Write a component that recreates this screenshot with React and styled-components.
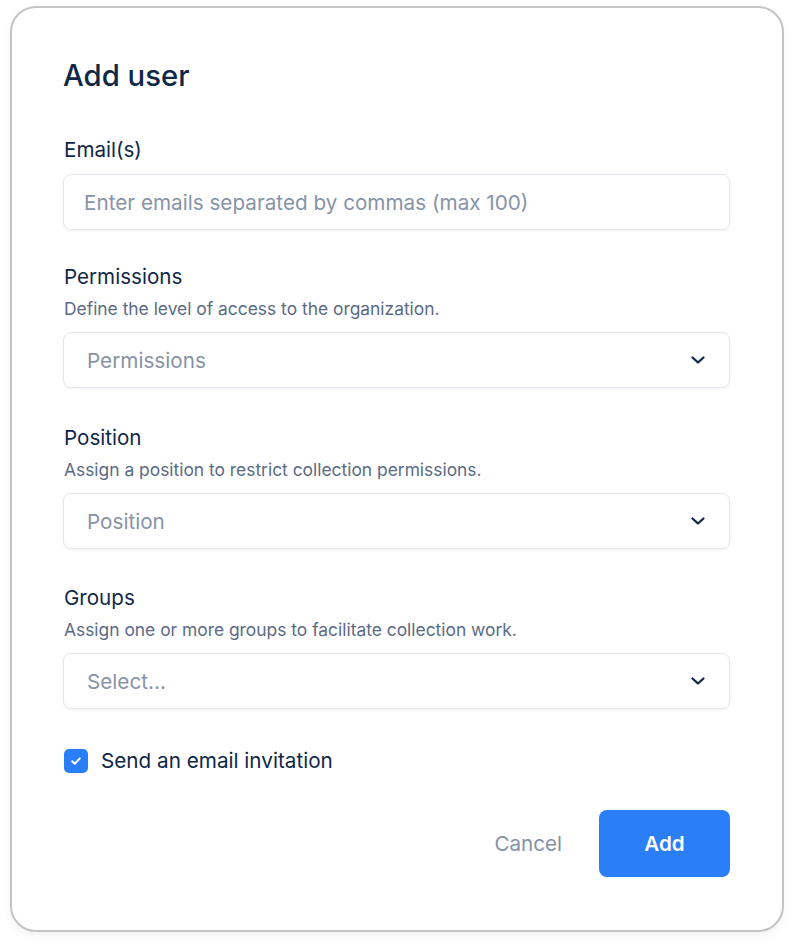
import React from "react";
import styled, { createGlobalStyle } from "styled-components";

const GlobalStyle = createGlobalStyle`
  body {
    margin: 0;
    background: #ffffff;
    font-family: Inter, "Noto Sans", sans-serif;
  }
`;

const Page = styled.div`
  width: 794px;
  height: 946px;
  padding: 6px 0 0 10px;
  box-sizing: border-box;
`;

const Card = styled.div`
  width: 774px;
  height: 926px;
  box-sizing: border-box;
  border: 2px solid #c4c4c4;
  border-radius: 26px;
  background: #ffffff;
  box-shadow: 0 4px 10px rgba(0, 0, 0, 0.05);
  padding: 43px 52px 0 51px;
  display: flex;
  flex-direction: column;
`;

const Title = styled.h1`
  margin: 0;
  font-size: 29.3px;
  font-weight: 500;
  line-height: 50px;
  color: #0f2748;
`;

const Field = styled.div`
  display: flex;
  flex-direction: column;
  margin-top: ${(p) => p.$top}px;
`;

const Label = styled.div`
  font-size: 20.6px;
  line-height: 24px;
  color: #0f2748;
  padding-left: 1px;
`;

const Hint = styled.div`
  font-size: 17.4px;
  line-height: 20px;
  color: #5b6b85;
  margin-top: 10px;
  padding-left: 1px;
`;

const Box = styled.div`
  margin-top: ${(p) => p.$top}px;
  height: 56px;
  box-sizing: border-box;
  border: 1px solid #e3e7ee;
  border-radius: 8px;
  box-shadow: 0 1px 3px rgba(15, 39, 72, 0.06);
  display: flex;
  align-items: center;
  justify-content: space-between;
  padding: 0 23px 0 ${(p) => p.$pad}px;
  font-size: 20.7px;
  color: #8893a7;
`;

const Chevron = () => (
  <svg width="16" height="16" viewBox="0 0 16 16" fill="none">
    <path
      d="M2.5 5.5 8 10.5l5.5-5"
      stroke="#0f2748"
      strokeWidth="2.3"
      strokeLinecap="round"
      strokeLinejoin="round"
    />
  </svg>
);

const CheckRow = styled.label`
  display: flex;
  align-items: center;
  gap: 13px;
  margin-top: 39px;
  padding-left: 1px;
  font-size: 20.7px;
  color: #0f2748;
`;

const CheckBox = styled.span`
  width: 24px;
  height: 24px;
  border-radius: 5px;
  background: #2a7ef7;
  display: flex;
  align-items: center;
  justify-content: center;
`;

const Actions = styled.div`
  display: flex;
  justify-content: flex-end;
  align-items: center;
  gap: 37px;
  margin-top: 37px;
`;

const CancelButton = styled.button`
  border: none;
  background: none;
  padding: 0;
  font-family: inherit;
  font-size: 20.6px;
  color: #8591a5;
  cursor: pointer;
`;

const AddButton = styled.button`
  width: 131px;
  height: 67px;
  border: none;
  border-radius: 8px;
  background: #2a7ef7;
  color: #ffffff;
  font-family: inherit;
  font-size: 20.6px;
  font-weight: 600;
  cursor: pointer;
`;

const App = () => (
  <Page>
    <GlobalStyle />
    <Card>
      <Title>Add user</Title>

      <Field $top={37}>
        <Label>Email(s)</Label>
        <Box $top={12} $pad={20}>Enter emails separated by commas (max 100)</Box>
      </Field>

      <Field $top={35}>
        <Label>Permissions</Label>
        <Hint>Define the level of access to the organization.</Hint>
        <Box $top={13} $pad={23}>
          Permissions
          <Chevron />
        </Box>
      </Field>

      <Field $top={38}>
        <Label>Position</Label>
        <Hint>Assign a position to restrict collection permissions.</Hint>
        <Box $top={13} $pad={23}>
          Position
          <Chevron />
        </Box>
      </Field>

      <Field $top={37}>
        <Label>Groups</Label>
        <Hint>Assign one or more groups to facilitate collection work.</Hint>
        <Box $top={13} $pad={23}>
          Select...
          <Chevron />
        </Box>
      </Field>

      <CheckRow>
        <CheckBox>
          <svg width="14" height="14" viewBox="0 0 14 14" fill="none">
            <path
              d="M3.2 7.3 5.8 9.8 10.8 4.4"
              stroke="#ffffff"
              strokeWidth="2"
              strokeLinecap="round"
              strokeLinejoin="round"
            />
          </svg>
        </CheckBox>
        Send an email invitation
      </CheckRow>

      <Actions>
        <CancelButton>Cancel</CancelButton>
        <AddButton>Add</AddButton>
      </Actions>
    </Card>
  </Page>
);

export default App;
